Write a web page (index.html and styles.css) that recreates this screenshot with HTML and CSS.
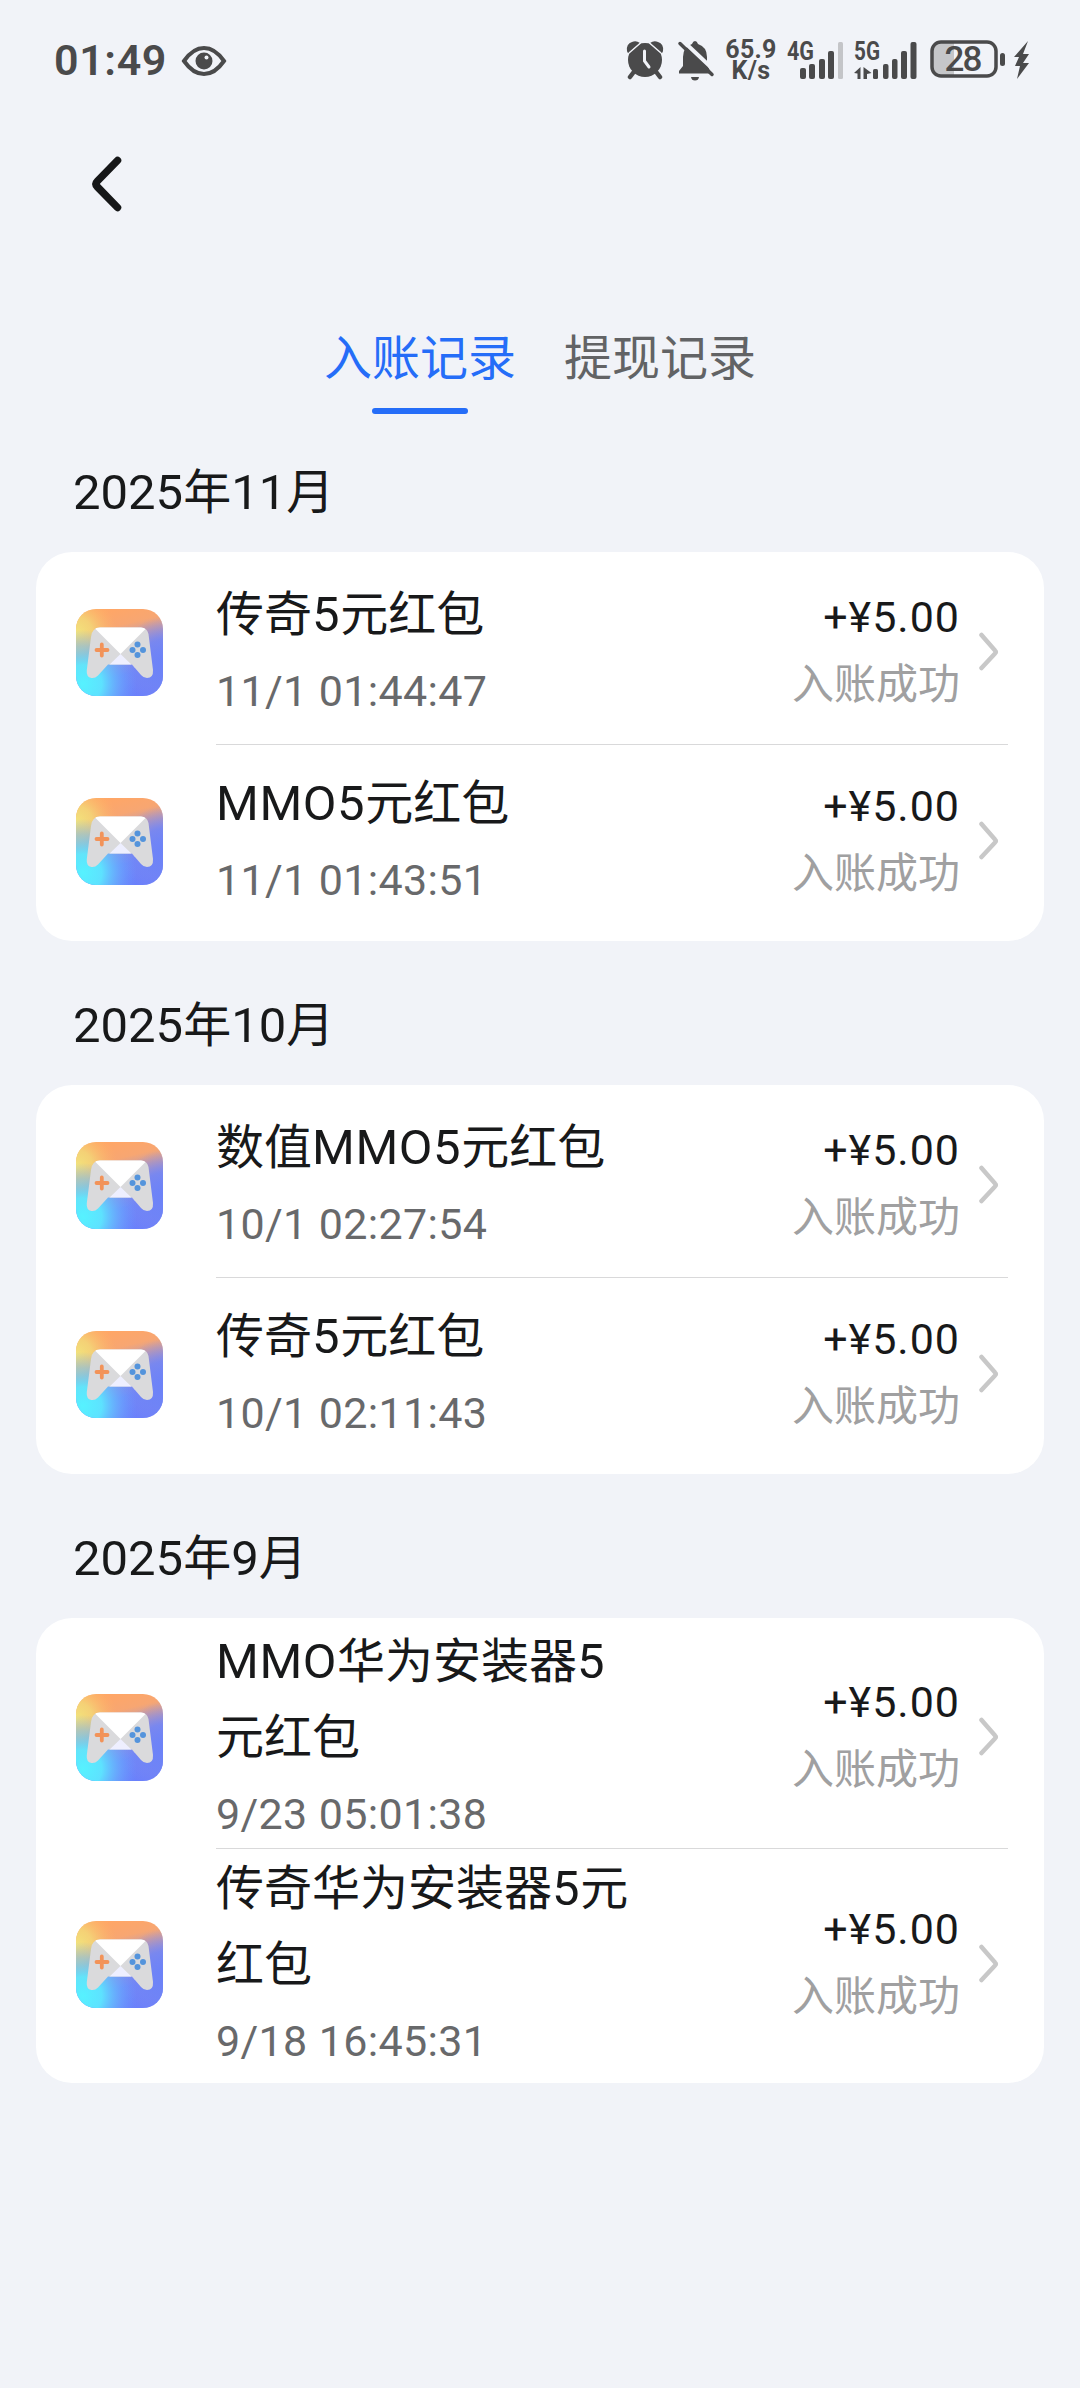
FILE: index.html
```html
<!DOCTYPE html>
<html lang="zh-CN">
<head>
<meta charset="utf-8">
<title>入账记录</title>
<link rel="stylesheet" href="styles.css">
</head>
<body>
<svg class="defs" width="0" height="0" aria-hidden="true">
  <defs>
    <linearGradient id="base" x1=".4" y1="0" x2=".65" y2="1">
      <stop offset="0" stop-color="#ffa666"/><stop offset=".2" stop-color="#f7a672"/><stop offset=".48" stop-color="#9b95d8"/><stop offset=".75" stop-color="#6c86fa"/><stop offset="1" stop-color="#6a80fb"/>
    </linearGradient>
    <radialGradient id="yellow" cx="0" cy=".28" r=".48"><stop offset="0" stop-color="#f2e47c"/><stop offset=".4" stop-color="#f3d878" stop-opacity=".85"/><stop offset="1" stop-color="#ffb066" stop-opacity="0"/></radialGradient>
    <radialGradient id="cyan" cx=".08" cy=".86" r=".62"><stop offset="0" stop-color="#56f2ff"/><stop offset=".35" stop-color="#5ceaff" stop-opacity=".92"/><stop offset=".7" stop-color="#68b8ff" stop-opacity=".5"/><stop offset="1" stop-color="#6a9dff" stop-opacity="0"/></radialGradient>
    <radialGradient id="violet" cx="1" cy=".6" r=".5"><stop offset="0" stop-color="#6c82f8"/><stop offset=".5" stop-color="#7084f5" stop-opacity=".8"/><stop offset="1" stop-color="#8088ee" stop-opacity="0"/></radialGradient>
    <linearGradient id="plus" x1="0" y1="0" x2="1" y2="1"><stop offset="0" stop-color="#ff9d68"/><stop offset="1" stop-color="#ef8245"/></linearGradient>
    <clipPath id="pad"><path d="M24 18.5H65Q71 18.5 72.500 25L77 61Q77.500 69 71 69Q67.500 69 65 66L56 55.500H32L22 66.500Q19 69.500 15.500 69Q10 68 10.800 61L15 28Q16 18.500 24 18.500Z"/></clipPath>
    <symbol id="gamepad" viewBox="0 0 87 87">
      <rect width="87" height="87" rx="20" fill="url(#base)"/>
      <rect width="87" height="87" rx="20" fill="url(#violet)"/>
      <rect width="87" height="87" rx="20" fill="url(#yellow)"/>
      <rect width="87" height="87" rx="20" fill="url(#cyan)"/>
      <g clip-path="url(#pad)">
        <rect x="8" y="16" width="72" height="56" fill="#dadadc"/>
        <path d="M44.500 45L30 59H59Z" fill="#eeefff"/>
        <path d="M16 16.500H73L44.500 45Z" fill="#fff"/>
      </g>
      <path d="M25.800 35.500V46.500M20.500 41H31.500" stroke="#f29359" stroke-width="3.800" stroke-linecap="round"/>
      <g fill="#5494dc"><circle cx="61.500" cy="35.500" r="3"/><circle cx="56.500" cy="41" r="3"/><circle cx="67" cy="41" r="3"/><circle cx="61.500" cy="46" r="3"/></g>
    </symbol>
    <symbol id="next" viewBox="0 0 20 40"><path d="M2.500 3L16 18.500Q17.500 20 16 21.500L2.500 36" fill="none" stroke="#c8c8c8" stroke-width="4.500" stroke-linecap="round"/></symbol>
  </defs>
</svg>

<header class="status">
  <span class="clock">01:49</span>
  <svg class="eye" width="46" height="32" viewBox="0 0 46 32"><path d="M3 16Q12 3 23 3T43 16Q34 29 23 29T3 16Z" fill="none" stroke="#4a4a4b" stroke-width="4"/><circle cx="23" cy="16" r="8.500" fill="#4a4a4b"/><circle cx="25.500" cy="12.500" r="2" fill="#f1f3f8"/></svg>
  <div class="indicators">
    <svg width="38" height="40" viewBox="0 0 38 40"><g fill="#4a4a4b"><circle cx="19" cy="20" r="17"/><path d="M1 11Q0 4 6 2Q10 0 14 3L3 13Q1 13 1 11ZM37 11Q38 4 32 2Q28 0 24 3L35 13Q37 13 37 11Z"/></g><path d="M14.500 3L3 13M23.500 3L35 13" stroke="#f1f3f8" stroke-width="1.500"/><path d="M7 33L4 37M31 33L34 37" stroke="#4a4a4b" stroke-width="4.500" stroke-linecap="round"/><path d="M18.500 11V21L23 27" fill="none" stroke="#f1f3f8" stroke-width="3" stroke-linecap="round"/></svg>
    <svg class="bell" width="38" height="42" viewBox="0 0 38 42"><path d="M15 4Q16 1 18 1T21 4Q30 7 30 17V24L34 33.500H2V31L6 26V17Q6 7 15 4ZM14 37H22Q21.500 40.500 18 40.500T14 37Z" fill="#4a4a4b"/><path d="M5 0L38 31" stroke="#f1f3f8" stroke-width="4"/><path d="M3 3.500L35 34.500" stroke="#4a4a4b" stroke-width="3.500" stroke-linecap="round"/></svg>
    <div class="speed"><span>65.9</span><span>K/s</span></div>
    <svg class="signal" width="58" height="42" viewBox="0 0 58 42"><text class="net" x="0" y="20" textLength="27" lengthAdjust="spacingAndGlyphs">4G</text><g fill="#4a4a4b"><rect x="13" y="28" width="6" height="11" rx="2"/><rect x="22" y="24" width="6" height="15" rx="2"/><rect x="32" y="19" width="6" height="20" rx="2"/><rect x="41" y="11" width="6" height="28" rx="2"/></g><rect x="51" y="2" width="5" height="37" rx="1.500" fill="#c4c5c8"/></svg>
    <svg class="signal" width="64" height="42" viewBox="0 0 64 42"><text class="net" x="0" y="20" textLength="26" lengthAdjust="spacingAndGlyphs">5G</text><g fill="#4a4a4b"><path d="M0 33L6.500 27V39H3.500V33.500ZM9.500 27L17.500 33L13 34V39H9.500Z"/><rect x="19" y="29" width="5" height="10" rx="1.500"/><rect x="29" y="24" width="5.500" height="15" rx="2"/><rect x="38" y="19" width="5.500" height="20" rx="2"/><rect x="47" y="11" width="6" height="28" rx="2"/><rect x="56.500" y="2" width="6" height="37" rx="2"/></g></svg>
    <svg class="battery" width="76" height="38" viewBox="0 0 76 38"><path d="M24 2V36H12Q2 36 2 26V12Q2 2 12 2Z" fill="#c5c6c9"/><rect x="2" y="2" width="64" height="34" rx="9" fill="none" stroke="#4a4a4b" stroke-width="3.500"/><rect x="70" y="13" width="5" height="13" rx="2.500" fill="#4a4a4b"/><text class="level" x="14.500" y="31" textLength="38">28</text></svg>
    <svg class="bolt" width="16" height="40" viewBox="0 0 16 40"><path d="M14 1L0 17H5L1 26H6L3 39L15 23H9L15 14H9Z" fill="#4a4a4b"/></svg>
  </div>
</header>

<nav class="topbar"><svg width="36" height="60" viewBox="0 0 36 60"><path d="M27.500 6.500L7.500 27Q4.500 30 7.500 33L27.500 53.500" fill="none" stroke="#161718" stroke-width="7.500" stroke-linecap="round"/></svg></nav>

<nav class="tabs"><span class="tab active">入账记录</span><span class="tab">提现记录</span></nav>

<main>
  <h2 class="month"><b>2025</b>年<b>11</b>月</h2>
  <section class="card">
    <article class="row">
      <svg class="app"><use href="#gamepad"/></svg>
      <div class="info"><p class="title">传奇<b>5</b>元红包</p><p class="date">11/1 01:44:47</p></div>
      <div class="amount"><p class="money">+¥5.00</p><p class="state">入账成功</p></div>
      <svg class="next"><use href="#next"/></svg>
    </article>
    <hr class="divider">
    <article class="row">
      <svg class="app"><use href="#gamepad"/></svg>
      <div class="info"><p class="title"><b>MMO5</b>元红包</p><p class="date">11/1 01:43:51</p></div>
      <div class="amount"><p class="money">+¥5.00</p><p class="state">入账成功</p></div>
      <svg class="next"><use href="#next"/></svg>
    </article>
  </section>

  <h2 class="month"><b>2025</b>年<b>10</b>月</h2>
  <section class="card">
    <article class="row">
      <svg class="app"><use href="#gamepad"/></svg>
      <div class="info"><p class="title">数值<b>MMO5</b>元红包</p><p class="date">10/1 02:27:54</p></div>
      <div class="amount"><p class="money">+¥5.00</p><p class="state">入账成功</p></div>
      <svg class="next"><use href="#next"/></svg>
    </article>
    <hr class="divider">
    <article class="row">
      <svg class="app"><use href="#gamepad"/></svg>
      <div class="info"><p class="title">传奇<b>5</b>元红包</p><p class="date">10/1 02:11:43</p></div>
      <div class="amount"><p class="money">+¥5.00</p><p class="state">入账成功</p></div>
      <svg class="next"><use href="#next"/></svg>
    </article>
  </section>

  <h2 class="month"><b>2025</b>年<b>9</b>月</h2>
  <section class="card">
    <article class="row">
      <svg class="app"><use href="#gamepad"/></svg>
      <div class="info"><p class="title"><b>MMO</b>华为安装器<b>5</b>元红包</p><p class="date">9/23 05:01:38</p></div>
      <div class="amount"><p class="money">+¥5.00</p><p class="state">入账成功</p></div>
      <svg class="next"><use href="#next"/></svg>
    </article>
    <hr class="divider">
    <article class="row">
      <svg class="app"><use href="#gamepad"/></svg>
      <div class="info"><p class="title">传奇华为安装器<b>5</b>元红包</p><p class="date">9/18 16:45:31</p></div>
      <div class="amount"><p class="money">+¥5.00</p><p class="state">入账成功</p></div>
      <svg class="next"><use href="#next"/></svg>
    </article>
  </section>
</main>
</body>
</html>
```

FILE: styles.css
```css
* { box-sizing: border-box; }

body {
  margin: 0;
  width: 1080px;
  min-height: 2388px;
  background: #f1f3f8;
  color: #18191a;
  font-family: Roboto, "Noto Sans CJK SC", sans-serif;
}

p, h2 { margin: 0; font-weight: 400; }
svg { display: block; flex: none; }
.defs { position: absolute; }

.status {
  display: flex;
  align-items: flex-start;
  height: 120px;
  padding: 40px 50px 0 54px;
  color: #4a4a4b;
}
.clock {
  width: 127px;
  font-size: 43px;
  font-weight: 600;
  line-height: 40px;
  letter-spacing: .6px;
}
.eye { margin-top: 5px; }
.indicators { display: flex; margin-left: auto; }
.bell { margin-left: 13px; }
.speed {
  display: flex;
  flex-direction: column;
  align-items: center;
  width: 54px;
  margin-left: 9px;
  font-size: 25px;
  font-weight: 700;
  line-height: 20.5px;
  letter-spacing: .3px;
}
.signal { margin-left: 9px; overflow: visible; }
.net { font-size: 25px; font-weight: 700; fill: #4a4a4b; }
.battery { margin-left: 12px; }
.level { font-size: 35px; font-weight: 500; fill: #4a4a4b; }
.bolt { margin-left: 8px; }

.topbar { height: 201px; padding: 34px 0 0 90px; }

.tabs {
  display: flex;
  justify-content: center;
  gap: 48px;
  height: 115px;
}
.tab {
  display: flex;
  flex-direction: column;
  align-items: center;
  color: #626365;
  font-size: 48px;
  line-height: 76px;
}
.active { color: #256df8; }
.active::after {
  content: "";
  width: 96px;
  height: 6px;
  margin-top: 11px;
  border-radius: 3px;
  background: #256df8;
}

.month {
  height: 116px;
  padding-left: 73px;
  font-size: 48px;
  line-height: 114px;
}
.month b { font-size: 49px; font-weight: 400; line-height: 1; }

.card {
  margin: 0 36px 28px;
  padding: 6px 36px 6px 40px;
  border-radius: 36px;
  background: #fff;
}
.row {
  display: flex;
  align-items: center;
  min-height: 188px;
}
.app { width: 87px; height: 87px; }
.info { width: 420px; margin-left: 53px; }
.title { font-size: 48px; line-height: 76px; }
.title b { font-size: 49px; font-weight: 400; line-height: 1; letter-spacing: .6px; }
.date {
  height: 74px;
  color: #68696b;
  font-size: 43px;
  line-height: 76px;
  letter-spacing: .35px;
}
.amount {
  margin: -3px 1px 0 auto;
  text-align: right;
  font-size: 42px;
  line-height: 68px;
}
.money { font-size: 43px; letter-spacing: 1px; }
.state { color: #a0a0a1; }
.next { width: 20px; height: 40px; margin: 0 9px 0 18px; }
.divider {
  height: 1px;
  margin: -2px 0 2px 140px;
  border: 0;
  background: #d9d9da;
}
```
